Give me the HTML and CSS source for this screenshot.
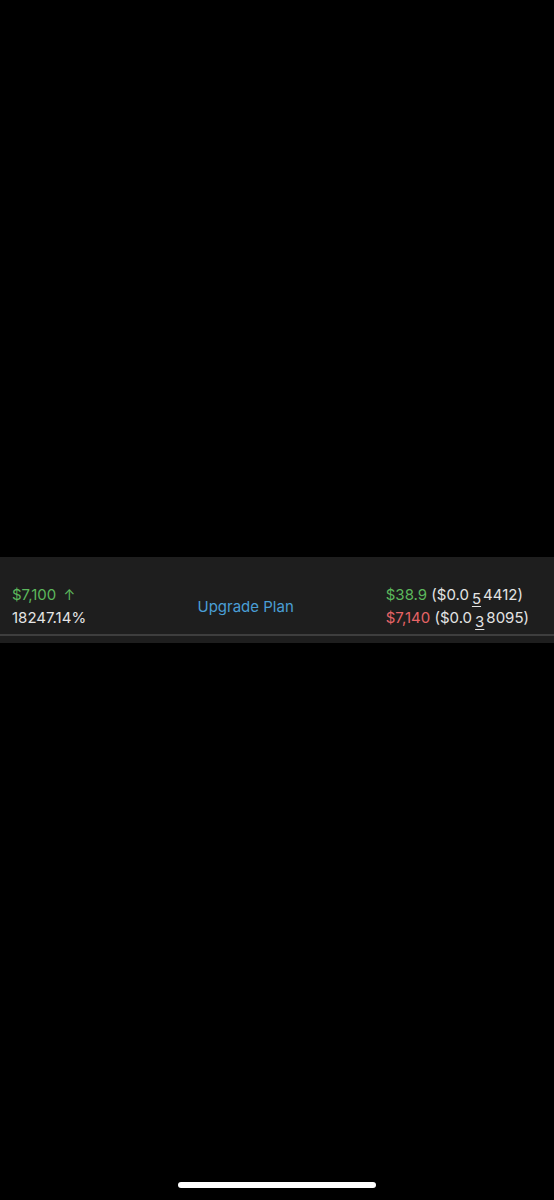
FILE: index.html
```html
<!DOCTYPE html>
<html>
<head>
<meta charset="utf-8">
<link rel="stylesheet" href="styles.css">
</head>
<body>
<div class="screen">
  <div class="top-space"></div>
  <div class="ticker">
    <div class="ticker-row">
      <div class="col left">
        <div class="line"><span class="green">$7,100</span> <span class="arrow green">↑</span></div>
        <div class="line white">18247.14%</div>
      </div>
      <div class="upgrade">Upgrade Plan</div>
      <div class="col right">
        <div class="line"><span class="green">$38.9</span> <span class="white">($0.0<span class="sub">5</span>4412)</span></div>
        <div class="line"><span class="red">$7,140</span> <span class="white">($0.0<span class="sub">3</span>8095)</span></div>
      </div>
    </div>
    <div class="divider"></div>
    <div class="ticker-foot"></div>
  </div>
  <div class="fill"></div>
  <div class="home-wrap"><div class="home"></div></div>
</div>
</body>
</html>
```
FILE: styles.css
```css
html, body {
  margin: 0;
  padding: 0;
  background: #000;
}
.screen {
  width: 554px;
  height: 1200px;
  display: flex;
  flex-direction: column;
  font-family: Inter, "Noto Sans", sans-serif;
  font-size: 15px;
}
.top-space {
  height: 557px;
}
.ticker {
  background: #1e1e1e;
}
.ticker-row {
  height: 77px;
  box-sizing: border-box;
  padding: 21px 25px 0 12px;
  display: flex;
  align-items: center;
}
.col {
  display: flex;
  flex-direction: column;
  gap: 1px;
}
.left {
  flex: 1;
}
.right {
  margin-left: 92px;
}
.line {
  line-height: 22px;
  white-space: nowrap;
}
.green { color: #5cb85c; }
.red { color: #e66466; }
.white { color: #e4e4e4; }
.arrow {
  margin-left: 3px;
  font-size: 14px;
}
.upgrade {
  color: #4a9fd6;
}
.sub {
  display: inline-block;
  text-decoration: underline;
  text-underline-offset: 2px;
  position: relative;
  top: 4px;
  margin: 0 2px 0 3px;
}
.divider {
  height: 2px;
  background: #3e3e3e;
}
.ticker-foot {
  height: 7px;
}
.fill {
  flex: 1;
}
.home-wrap {
  height: 18px;
  display: flex;
  justify-content: center;
}
.home {
  width: 198px;
  height: 6px;
  border-radius: 3px;
  background: #fff;
}
```
